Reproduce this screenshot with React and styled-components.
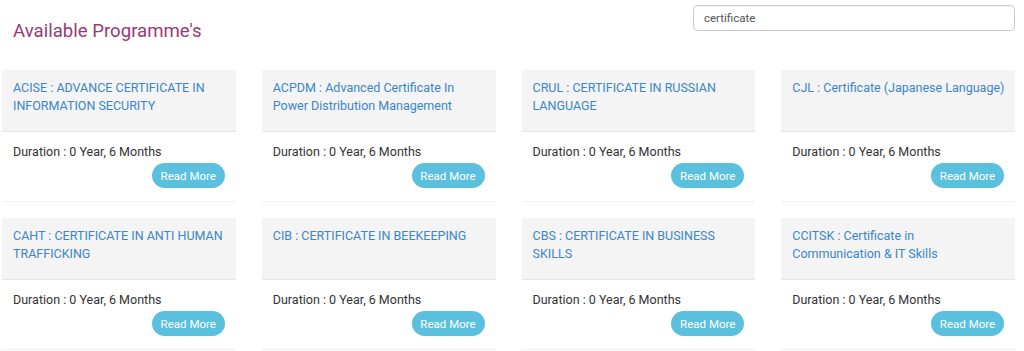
import styled, { createGlobalStyle } from "styled-components";

const programmes = [
  { code: "ACISE", name: "ADVANCE CERTIFICATE IN INFORMATION SECURITY" },
  { code: "ACPDM", name: "Advanced Certificate In Power Distribution Management" },
  { code: "CRUL", name: "CERTIFICATE IN RUSSIAN LANGUAGE" },
  { code: "CJL", name: "Certificate (Japanese Language)" },
  { code: "CAHT", name: "CERTIFICATE IN ANTI HUMAN TRAFFICKING" },
  { code: "CIB", name: "CERTIFICATE IN BEEKEEPING" },
  { code: "CBS", name: "CERTIFICATE IN BUSINESS SKILLS" },
  { code: "CCITSK", name: "Certificate in Communication & IT Skills" },
];

const GlobalStyle = createGlobalStyle`
  * { box-sizing: border-box; }
  body {
    margin: 0;
    background: #ffffff;
    font-family: Roboto, "Liberation Sans", Arial, sans-serif;
    color: #333333;
  }
`;

function App() {
  return (
    <Page>
      <GlobalStyle />
      <TopBar>
        <Heading>Available Programme's</Heading>
        <Search defaultValue="certificate" />
      </TopBar>
      <Grid>
        {programmes.map((p) => (
          <Card key={p.code}>
            <CardHeader>
              <Title href="#">
                {p.code} : {p.name}
              </Title>
            </CardHeader>
            <CardBody>
              <Duration>Duration : 0 Year, 6 Months</Duration>
              <ReadMore>Read More</ReadMore>
            </CardBody>
          </Card>
        ))}
      </Grid>
    </Page>
  );
}

const Page = styled.div`
  width: 1024px;
  padding: 5px 9px 0 2px;
`;

const TopBar = styled.div`
  display: flex;
  justify-content: space-between;
  align-items: flex-start;
  height: 65px;
`;

const Heading = styled.h1`
  margin: 14px 0 0 11px;
  font-size: 18.6px;
  font-weight: 400;
  line-height: 24px;
  color: #9b3a72;
`;

const Search = styled.input`
  width: 322px;
  height: 26px;
  padding: 0 10px;
  border: 1px solid #cccccc;
  border-radius: 4px;
  font-family: inherit;
  font-size: 11.5px;
  color: #555555;
  box-shadow: inset 0 1px 1px rgba(0, 0, 0, 0.05);
  outline: none;
`;

const Grid = styled.div`
  display: grid;
  grid-template-columns: repeat(4, 1fr);
  column-gap: 26px;
  row-gap: 16px;
`;

const Card = styled.div`
  background: #ffffff;
  border-bottom: 1px solid #f0f0f0;
`;

const CardHeader = styled.div`
  height: 62px;
  padding: 9px 10.5px 0 11px;
  background: #f4f4f4;
  border-bottom: 1px solid #e6e6e6;
  font-size: 12.5px;
  line-height: 18px;
`;

const Title = styled.a`
  color: #3a86c8;
  text-decoration: none;
`;

const CardBody = styled.div`
  display: flex;
  flex-direction: column;
  padding: 11px 11px 13px;
`;

const Duration = styled.div`
  font-size: 12.5px;
  line-height: 18px;
  color: #333333;
`;

const ReadMore = styled.button`
  align-self: flex-end;
  margin-top: 2px;
  width: 73px;
  height: 25px;
  padding: 0;
  border: none;
  border-radius: 13px;
  background: #5bc0de;
  color: #ffffff;
  font-family: inherit;
  font-size: 11.5px;
  cursor: pointer;
`;

export default App;
